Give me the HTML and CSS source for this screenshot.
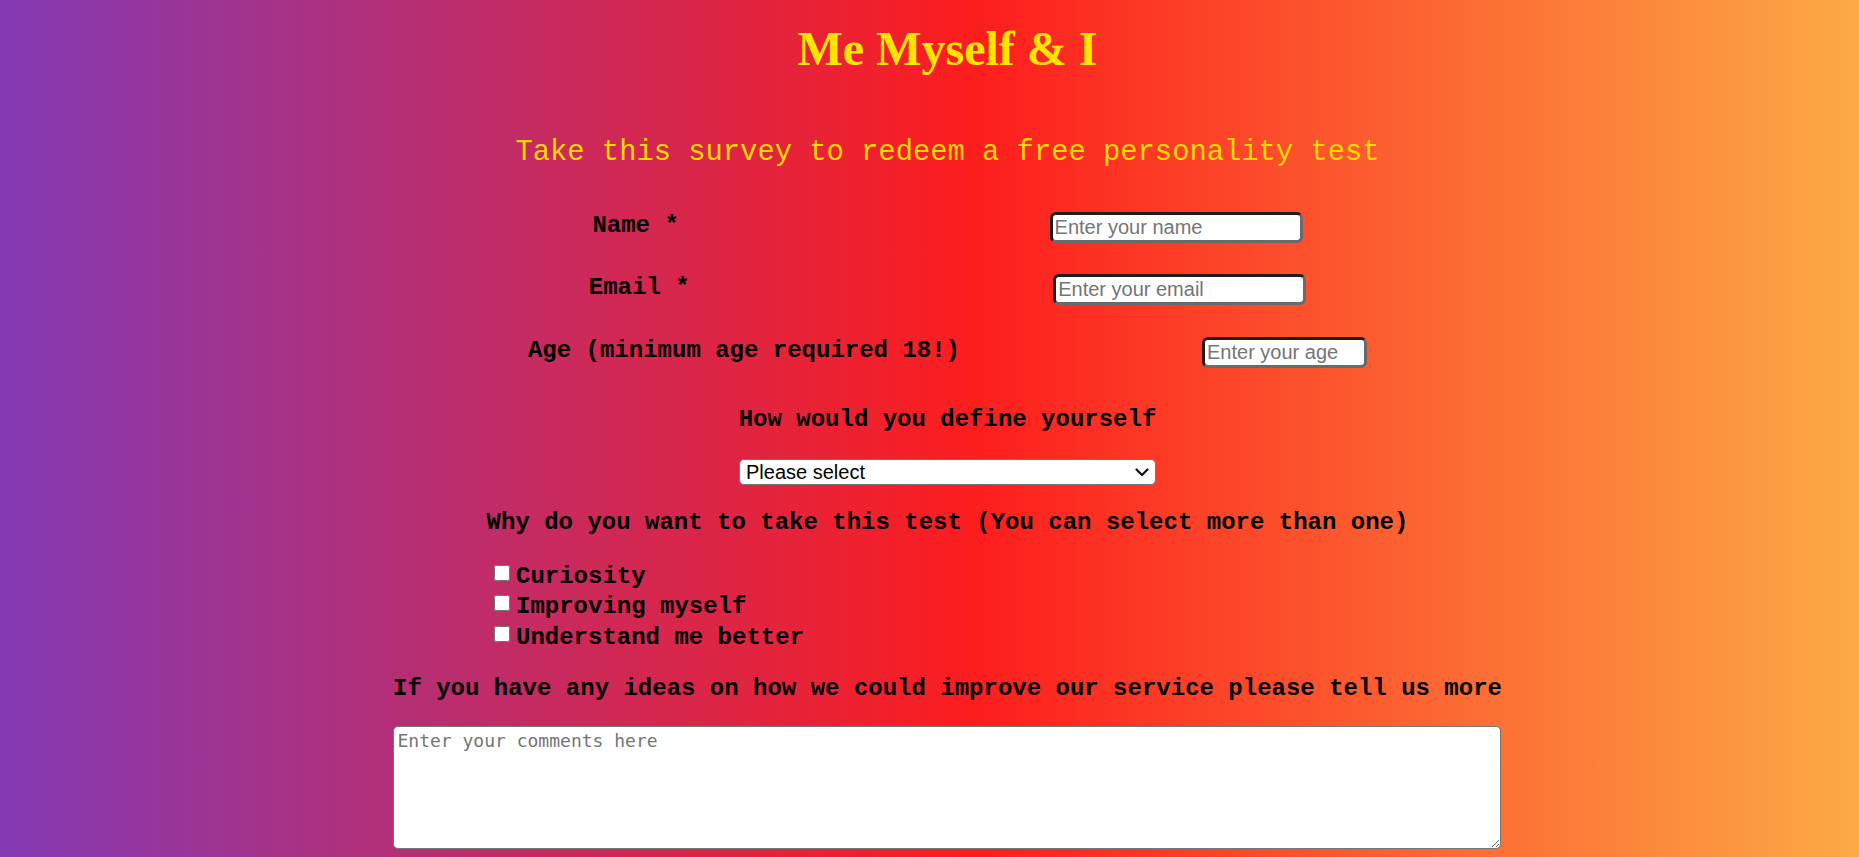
FILE: index.html
```html
<!DOCTYPE html>
<html lang="en">
<head>
<meta charset="utf-8">
<title>Me Myself &amp; I</title>
<link rel="stylesheet" href="styles.css">
</head>
<body>
<main class="page">
  <h1 class="title">Me Myself &amp; I</h1>
  <p class="subtitle">Take this survey to redeem a free personality test</p>
  <form class="survey">
    <div class="row">
      <label class="label" for="name">Name *</label>
      <input class="field field-wide" id="name" type="text" placeholder="Enter your name">
    </div>
    <div class="row">
      <label class="label" for="email">Email *</label>
      <input class="field field-wide" id="email" type="email" placeholder="Enter your email">
    </div>
    <div class="row">
      <label class="label" for="age">Age (minimum age required 18!)</label>
      <input class="field field-age" id="age" type="number" placeholder="Enter your age">
    </div>

    <label class="label block q-define" for="define">How would you define yourself</label>
    <div class="select-wrap">
      <select class="select" id="define">
        <option>Please select</option>
        <option>Introvert</option>
        <option>Extrovert</option>
      </select>
      <svg class="chev" width="14" height="9" viewBox="0 0 14 9"><path d="M1.5 1.5 L7 7 L12.5 1.5" fill="none" stroke="#111" stroke-width="2.2" stroke-linecap="round" stroke-linejoin="round"/></svg>
    </div>

    <p class="label block q-why">Why do you want to take this test (You can select more than one)</p>
    <div class="checks">
      <label class="check label"><input class="box" type="checkbox">Curiosity</label>
      <label class="check label"><input class="box" type="checkbox">Improving myself</label>
      <label class="check label"><input class="box" type="checkbox">Understand me better</label>
    </div>

    <label class="label block q-ideas" for="comments">If you have any ideas on how we could improve our service please tell us more</label>
    <textarea class="comments" id="comments" placeholder="Enter your comments here"></textarea>
  </form>
</main>
</body>
</html>
```

FILE: styles.css
```css
html {
  background: linear-gradient(90deg, #833ab4 0%, #fd1d1d 52.5%, #fcaa46 100%);
  min-height: 100%;
}

body {
  margin: 8px;
  background: transparent;
}

.page {
  padding-left: 36px;
  display: flex;
  flex-direction: column;
  align-items: center;
  text-align: center;
}

.title {
  font-family: "Liberation Serif", "Times New Roman", serif;
  font-weight: bold;
  font-size: 48px;
  color: #ffe400;
  margin: 14px 0 0;
  line-height: 53px;
}

.subtitle {
  font-family: "Liberation Mono", "Courier New", monospace;
  font-size: 28.8px;
  line-height: 33px;
  color: #ffd900;
  margin: 60.5px 0 0;
}

.survey {
  display: flex;
  flex-direction: column;
  align-items: center;
  margin-top: 43px;
}

.label {
  font-family: "Liberation Mono", "Courier New", monospace;
  font-weight: bold;
  font-size: 24px;
  line-height: 27px;
  color: #000;
}

.row {
  width: 1081px;
  height: 31px;
  display: flex;
  justify-content: space-around;
  align-items: center;
  margin-bottom: 31.5px;
}

.row .label {
  margin-bottom: 4px;
}

.field {
  box-sizing: border-box;
  height: 31px;
  border-style: solid;
  border-width: 3px;
  border-color: #1e1e1e #6a6a6a #6a6a6a #1e1e1e;
  border-radius: 6px;
  background: #fff;
  padding: 0 2px;
  font-family: "Liberation Sans", Arial, sans-serif;
  font-size: 20px;
  color: #000;
  outline: none;
}

.field::placeholder {
  color: #757575;
}

.field-wide {
  width: 253px;
}

.field-age {
  width: 165px;
  -moz-appearance: textfield;
}

.field-age::-webkit-outer-spin-button,
.field-age::-webkit-inner-spin-button {
  -webkit-appearance: none;
  margin: 0;
}

.block {
  display: block;
  margin: 0;
}

.q-define {
  margin-top: 7px;
}

.select-wrap {
  position: relative;
  margin-top: 26px;
  width: 417px;
  height: 26px;
}

.select {
  appearance: none;
  -webkit-appearance: none;
  box-sizing: border-box;
  width: 417px;
  height: 26px;
  border: 1px solid #767676;
  border-radius: 5px;
  background: #fff;
  font-family: "Liberation Sans", Arial, sans-serif;
  font-size: 20px;
  line-height: 24px;
  color: #000;
  padding: 0 24px 0 6px;
  text-align: left;
}

.chev {
  position: absolute;
  right: 7px;
  top: 9px;
  pointer-events: none;
}

.q-why {
  margin-top: 24px;
}

.checks {
  width: 919px;
  display: flex;
  flex-direction: column;
  align-items: flex-start;
  margin-top: 25px;
  padding-left: 6px;
  box-sizing: border-box;
}

.check {
  display: flex;
  align-items: center;
  height: 30.5px;
}

.box {
  width: 16px;
  height: 16px;
  margin: 0 6px 7px 0;
  accent-color: #0075ff;
}

.q-ideas {
  margin-top: 22px;
}

.comments {
  box-sizing: border-box;
  display: block;
  width: 1108px;
  height: 123px;
  margin-top: 24px;
  border: 1px solid #767676;
  border-radius: 5px;
  background: #fff;
  padding: 3px 3px;
  font-family: "DejaVu Sans Mono", monospace;
  font-size: 18px;
  color: #000;
  resize: both;
}

.comments::placeholder {
  color: #757575;
}
```
